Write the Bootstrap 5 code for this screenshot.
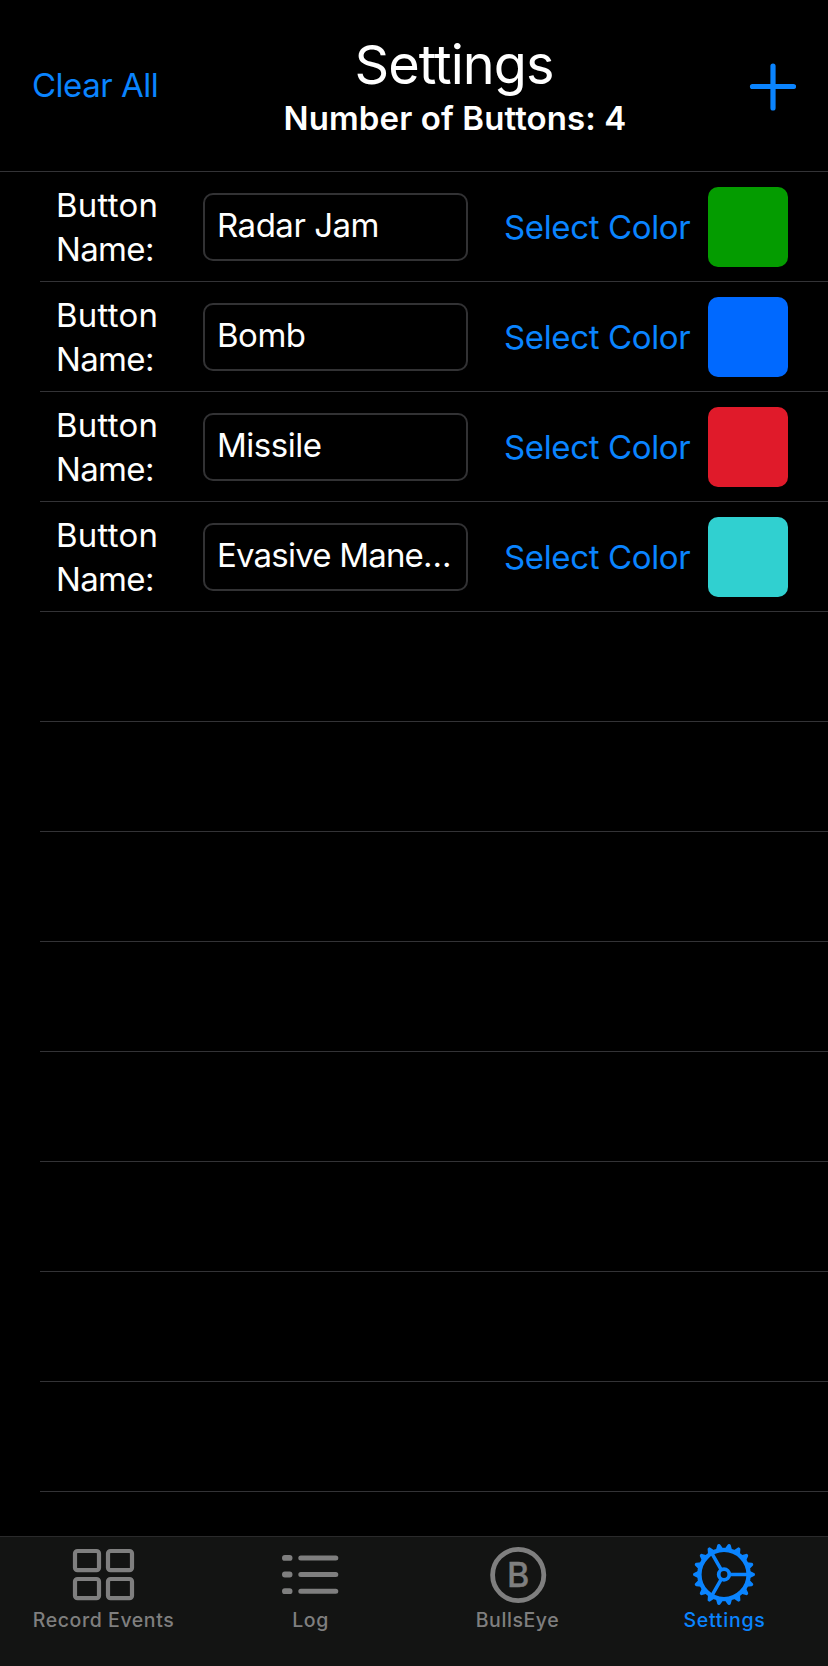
<!DOCTYPE html>
<html lang="en" data-bs-theme="dark">
<head>
<meta charset="utf-8">
<meta name="viewport" content="width=device-width, initial-scale=1">
<title>Settings</title>
<link href="https://cdn.jsdelivr.net/npm/bootstrap@5.3.0/dist/css/bootstrap.min.css" rel="stylesheet">
<style>
  body { background: #000; color: #fff; font: 400 33px/44px Inter, sans-serif; height: 1666px; overflow: hidden; }
  .tint { color: #0a84ff; }
  .top-bar { height: 172px; border-bottom: 1px solid #333336; padding: 0 32px 0 32px; }
  .clear-link { width: 177px; padding-bottom: 2px; letter-spacing: -.5px; }
  .heading { width: 490px; padding-top: 4px; }
  .heading h1 { font-size: 54px; line-height: 60px; font-weight: 400; letter-spacing: -.96px; padding-top: 1px; }
  .heading p { line-height: 48px; font-weight: 600; letter-spacing: .1px; margin: -1px 0 0 2px; }
  .cell { height: 110px; margin-left: 40px; padding: 1px 40px 0 16px; border-bottom: 1px solid #333336; }
  .cell-label { width: 147px; }
  .cell-label span { display: block; letter-spacing: .23px; }
  .cell-label span + span { letter-spacing: -.66px; }
  .field { width: 265px; height: 68px; border: 2px solid #323234; border-radius: 10px; padding-left: 12px; line-height: 60px; letter-spacing: -.48px; }
  .field.tight { letter-spacing: -.8px; }
  .select-link { margin-left: 36px; letter-spacing: -.36px; }
  .swatch { width: 80px; height: 80px; border-radius: 10px; }
  .tab-bar { height: 130px; background: #131413; border-top: 1px solid #2a2a2b; padding-top: 6px; font-size: 19.5px; font-weight: 500; line-height: 24px; letter-spacing: .58px; color: #7f7f7f; }
  .tab-bar svg { display: block; margin-bottom: 1px; }
</style>
</head>
<body class="d-flex flex-column">
  <header class="top-bar d-flex align-items-center flex-shrink-0">
    <a class="clear-link tint text-decoration-none text-nowrap">Clear All</a>
    <div class="heading text-center">
      <h1 class="mb-0">Settings</h1>
      <p class="text-nowrap">Number of Buttons: 4</p>
    </div>
    <svg class="ms-auto tint" width="50" height="50" viewBox="0 0 50 50" fill="none" stroke="currentColor" stroke-width="5.2" stroke-linecap="round"><path d="M27 5v42M6.5 25.5h41"/></svg>
  </header>

  <main class="flex-grow-1 overflow-hidden" id="list"></main>

  <nav class="tab-bar row g-0 flex-shrink-0 text-nowrap">
    <div class="col d-flex flex-column align-items-center">
      <svg width="64" height="64" fill="none" stroke="currentColor" stroke-width="4.2">
        <rect x="3" y="8" width="24" height="19.2" rx="2.5"/><rect x="36" y="8" width="24" height="19.2" rx="2.5"/>
        <rect x="3" y="36" width="24" height="19.2" rx="2.5"/><rect x="36" y="36" width="24" height="19.2" rx="2.5"/>
      </svg>
      <span>Record Events</span>
    </div>
    <div class="col d-flex flex-column align-items-center">
      <svg width="64" height="64" fill="none" stroke="currentColor" stroke-linecap="round">
        <path stroke-width="5.8" d="M5.9 14.9h4.7M5.9 31.5h4.7M5.9 48.2h4.7"/>
        <path stroke-width="5" d="M21.8 14.9h35M21.8 31.5h35M21.8 48.2h35"/>
      </svg>
      <span>Log</span>
    </div>
    <div class="col d-flex flex-column align-items-center">
      <svg width="64" height="64">
        <circle cx="32.2" cy="32" r="25.6" fill="none" stroke="currentColor" stroke-width="4.8"/>
        <text x="32.2" y="44.3" text-anchor="middle" font-size="34" font-weight="500" letter-spacing="0" fill="currentColor" stroke="currentColor" stroke-width=".4">B</text>
      </svg>
      <span>BullsEye</span>
    </div>
    <div class="col d-flex flex-column align-items-center tint">
      <svg width="64" height="64">
        <g transform="translate(31 31.5)" fill="none" stroke="currentColor">
          <circle r="24.6" stroke-width="4.4"/>
          <circle r="5.3" stroke-width="3.8"/>
          <path stroke-width="3.5" d="M6 0H24M-3 -5.2L-12 -20.8M-3 5.2L-12 20.8"/>
          <g id="teeth" fill="currentColor" stroke="none"></g>
        </g>
      </svg>
      <span style="letter-spacing:.78px">Settings</span>
    </div>
  </nav>

<script>
  const buttons = [
    ['Radar Jam', '#049c00'],
    ['Bomb', '#0069ff'],
    ['Missile', '#e01a2a'],
    ['Evasive Mane…', '#30d0d0', 'tight']
  ];
  let rows = '';
  for (let i = 0; i < 12; i++) {
    const b = buttons[i];
    rows += '<div class="cell d-flex align-items-center text-nowrap">' + (b ?
      `<div class="cell-label"><span>Button</span><span>Name:</span></div>
       <div class="field ${b[2] || ''}">${b[0]}</div>
       <a class="select-link tint text-decoration-none">Select Color</a>
       <div class="swatch ms-auto" style="background:${b[1]}"></div>` : '') + '</div>';
  }
  document.getElementById('list').innerHTML = rows;

  let teeth = '';
  for (let a = 0; a < 360; a += 20)
    teeth += `<path transform="rotate(${a})" d="M25.5 -3.7L30 -1.6Q31 -1.3 31 0Q31 1.3 30 1.6L25.5 3.7Z"/>`;
  document.getElementById('teeth').innerHTML = teeth;
</script>
<script src="https://cdn.jsdelivr.net/npm/bootstrap@5.3.0/dist/js/bootstrap.bundle.min.js"></script>
</body>
</html>
